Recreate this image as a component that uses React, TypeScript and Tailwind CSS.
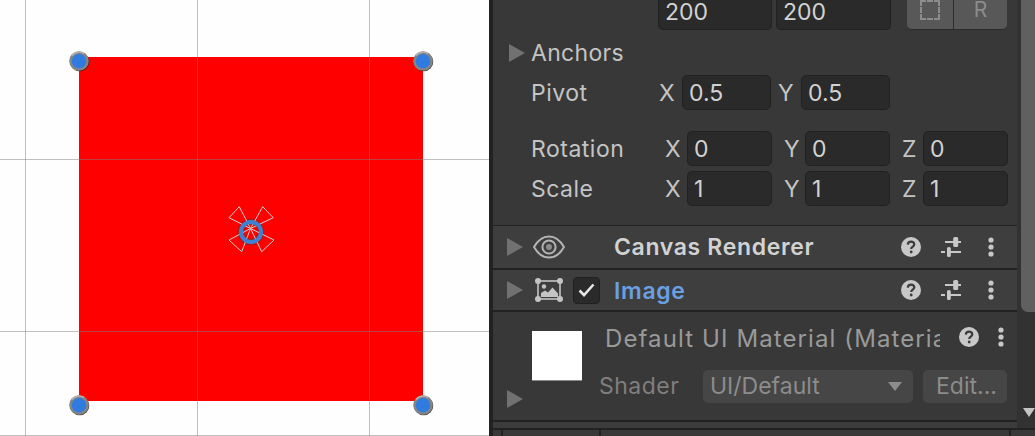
import React from 'react';

const FONT = "font-['Inter','Liberation_Sans',sans-serif]";

// scene view handles
const Handle: React.FC<{ pos: string }> = ({ pos }) => (
  <svg className={`absolute w-[22px] h-[22px] ${pos}`} viewBox="0 0 22 22">
    <circle cx="11.7" cy="11.7" r="9.6" fill="#1c1c1c" opacity="0.8" />
    <circle cx="11" cy="11" r="9.8" fill="#858585" />
    <path d="M4 5.5A9 9 0 0 1 16 3.5" stroke="#b4b4b4" strokeWidth="1.6" fill="none" />
    <circle cx="11" cy="11.2" r="7.2" fill="#2f7be0" />
  </svg>
);

const Field: React.FC<{ width: string; value: string }> = ({ width, value }) => (
  <div className={`${width} h-[35px] shrink-0 rounded-[5px] border border-[#212121] bg-[#2a2a2a] pl-[6px] text-[23px] leading-[35px] text-[#d2d2d2]`}>
    {value}
  </div>
);

// same field but running off the top of the window
const CutField: React.FC<{ width: string; value: string }> = ({ width, value }) => (
  <div className={`${width} h-[30px] shrink-0 rounded-b-[5px] border border-t-0 border-[#212121] bg-[#2a2a2a] pl-[6px] pt-px text-[23px] leading-[23px] text-[#d2d2d2]`}>
    {value}
  </div>
);

const Axis: React.FC<{ width: string; children: React.ReactNode }> = ({ width, children }) => (
  <span className={`${width} h-[35px] pt-px shrink-0 text-[23px] leading-[35px] tracking-[0.5px] text-[#c4c4c4]`}>{children}</span>
);

const Arrow: React.FC<{ className?: string }> = ({ className }) => (
  <svg className={`w-[16px] h-[18px] shrink-0 ${className ?? ''}`} viewBox="0 0 16 18">
    <path d="M0 0L16 9L0 18Z" fill="#717171" />
  </svg>
);

const HelpIcon = () => (
  <svg className="w-[20px] h-[20px] shrink-0" viewBox="0 0 20 20">
    <circle cx="10" cy="10" r="10" fill="#c8c8c8" />
    <path d="M6.8 7.6C6.9 5.6 8.3 4.6 10.1 4.6C12 4.6 13.3 5.7 13.3 7.3C13.3 9.6 10.2 9.6 10.2 12" stroke="#3c3c3c" strokeWidth="2.2" fill="none" />
    <circle cx="10.2" cy="15" r="1.4" fill="#3c3c3c" />
  </svg>
);

const SlidersIcon = () => (
  <svg className="w-[20px] h-[20px] shrink-0" viewBox="0 0 20 20">
    <path d="M4 5H13M16 5H20M0 15H4M9 15H20" stroke="#c8c8c8" strokeWidth="1.8" fill="none" />
    <rect x="12.2" y="0" width="5" height="10" rx="1.6" fill="#c8c8c8" />
    <rect x="6" y="10" width="3.8" height="10" rx="1.6" fill="#c8c8c8" />
  </svg>
);

const DotsIcon = () => (
  <svg className="w-[6px] h-[20px] shrink-0" viewBox="0 0 6 20">
    <circle cx="3" cy="3" r="2.6" fill="#c8c8c8" />
    <circle cx="3" cy="10" r="2.6" fill="#c8c8c8" />
    <circle cx="3" cy="17" r="2.6" fill="#c8c8c8" />
  </svg>
);

const EyeIcon = () => (
  <svg className="w-[32px] h-[24px] shrink-0" viewBox="0 0 32 24">
    <path d="M1 12C5 5 10 1.5 16 1.5C22 1.5 27 5 31 12C27 19 22 22.5 16 22.5C10 22.5 5 19 1 12Z" fill="none" stroke="#b4b4b4" strokeWidth="2" />
    <circle cx="16" cy="12" r="6.6" fill="none" stroke="#b4b4b4" strokeWidth="2" />
    <circle cx="16" cy="12" r="3" fill="#8c8c8c" />
  </svg>
);

const ImageIcon = () => (
  <svg className="w-[28px] h-[24px] shrink-0" viewBox="0 0 28 24">
    <rect x="3" y="3" width="22" height="18" fill="none" stroke="#c4c4c4" strokeWidth="1.6" />
    <circle cx="3" cy="3" r="3" fill="#c4c4c4" />
    <circle cx="25" cy="3" r="3" fill="#c4c4c4" />
    <circle cx="3" cy="21" r="3" fill="#c4c4c4" />
    <circle cx="25" cy="21" r="3" fill="#c4c4c4" />
    <circle cx="9" cy="8.5" r="2.2" fill="#c4c4c4" />
    <path d="M6 19V15L10 12.5L13 14.5L17.5 9.5L23 15.5V19Z" fill="#c4c4c4" />
  </svg>
);

const SceneView = () => (
  <div className="relative w-[489px] h-full shrink-0 bg-[#fefefe] overflow-hidden">
    <div className="absolute left-[79px] top-[57px] w-[344px] h-[344px] bg-[#ff0000]" />
    <div className="absolute left-[25px] top-0 w-px h-full bg-[#808080]/50" />
    <div className="absolute left-[197px] top-0 w-px h-full bg-[#808080]/50" />
    <div className="absolute left-[369px] top-0 w-px h-full bg-[#808080]/50" />
    <div className="absolute left-0 top-[159px] w-full h-px bg-[#808080]/50" />
    <div className="absolute left-0 top-[331px] w-full h-px bg-[#808080]/50" />
    <div className="absolute left-0 top-[435px] w-full h-px bg-[#808080]/50" />
    <Handle pos="left-[68px] top-[50px]" />
    <Handle pos="left-[412px] top-[50px]" />
    <Handle pos="left-[68px] top-[394px]" />
    <Handle pos="left-[412px] top-[394px]" />
    {/* pivot and anchor flower */}
    <svg className="absolute left-[215px] top-[195px] w-[70px] h-[70px]" viewBox="0 0 70 70">
      <circle cx="36" cy="37" r="10" fill="none" stroke="#b01a1a" strokeWidth="7" />
      <g fill="none" stroke="#cfcfcf" strokeWidth="1">
        <path d="M35.5 33.5L24.3 11.7L14 22.7L35.5 33.5" />
        <path d="M35.5 33.5L47.7 11.7L58.3 22.7L35.5 33.5" />
        <path d="M35.5 33.5L14 45L26.7 56.7L35.5 33.5" />
        <path d="M35.5 33.5L59 45L46.7 56.7L35.5 33.5" />
      </g>
      <circle cx="36" cy="37" r="10" fill="none" stroke="#3f80d2" strokeWidth="4" />
    </svg>
  </div>
);

const ComponentRow: React.FC<{ height: string; icon: React.ReactNode; title: string; tone: string }> = ({ height, icon, title, tone }) => (
  <div className={`${height} flex items-center bg-[#3e3e3e] pl-[14px] border-b-2 border-[#222222]`}>
    <Arrow />
    {icon}
    <span className={`ml-auto w-[287px] shrink-0 text-[23px] font-semibold leading-none tracking-[0.65px] ${tone}`}>{title}</span>
    <div className="flex items-center w-[93px] shrink-0 mr-[23px]">
      <HelpIcon />
      <div className="ml-[20px]"><SlidersIcon /></div>
      <div className="ml-[27px]"><DotsIcon /></div>
    </div>
  </div>
);

const Inspector = () => (
  <div className="flex-1 flex flex-col bg-[#383838]">
    <div className="h-[225px] shrink-0 flex flex-col">
      <div className="h-[30px] flex items-start pl-[165px]">
        <div className="flex gap-[4px] shrink-0">
          <CutField width="w-[114px]" value="200" />
          <CutField width="w-[115px]" value="200" />
        </div>
        <div className="ml-[16px] flex h-[30px] w-[100px] shrink-0 rounded-b-[5px] border-b border-[#2a2a2a] bg-[#585858]">
          <div className="flex w-[47px] items-start justify-center border-r border-[#2c2c2c]">
            <div className="w-[20px] h-[20px] border-2 border-dashed border-[#8c8c8c]" />
          </div>
          <div className="flex-1 flex items-start justify-center text-[21px] leading-[20px] text-[#8c8c8c]">R</div>
        </div>
      </div>
      <div className="h-[45px] flex items-center pl-[16px] pt-[1px]">
        <Arrow />
        <span className="ml-[6px] text-[23px] leading-none tracking-[0.3px] text-[#c4c4c4]">Anchors</span>
      </div>
      <div className="flex pl-[38px]">
        <Axis width="w-[128px]">Pivot</Axis>
        <Axis width="w-[23px]">X</Axis>
        <Field width="w-[89px]" value="0.5" />
        <div className="w-[7px]" />
        <Axis width="w-[23px]">Y</Axis>
        <Field width="w-[89px]" value="0.5" />
      </div>
      <div className="flex pl-[38px] mt-[21px]">
        <Axis width="w-[134px]">Rotation</Axis>
        <Axis width="w-[22px]">X</Axis>
        <Field width="w-[85px]" value="0" />
        <div className="w-[12px]" />
        <Axis width="w-[21px]">Y</Axis>
        <Field width="w-[85px]" value="0" />
        <div className="w-[12px]" />
        <Axis width="w-[21px]">Z</Axis>
        <Field width="w-[85px]" value="0" />
      </div>
      <div className="flex pl-[38px] mt-[5px]">
        <Axis width="w-[134px]">Scale</Axis>
        <Axis width="w-[22px]">X</Axis>
        <Field width="w-[85px]" value="1" />
        <div className="w-[12px]" />
        <Axis width="w-[21px]">Y</Axis>
        <Field width="w-[85px]" value="1" />
        <div className="w-[12px]" />
        <Axis width="w-[21px]">Z</Axis>
        <Field width="w-[85px]" value="1" />
      </div>
    </div>
    <div className="h-px bg-[#222222]" />
    <ComponentRow height="h-[44px]" icon={<div className="ml-[10px]"><EyeIcon /></div>} title="Canvas Renderer" tone="text-[#d2d2d2]" />
    <ComponentRow
      height="h-[42px]"
      icon={
        <div className="ml-[12px] flex items-center gap-[10px]">
          <ImageIcon />
          <div className="w-[27px] h-[27px] rounded-[4px] border border-[#212121] bg-[#2a2a2a] flex items-center justify-center">
            <svg className="w-[17px] h-[14px]" viewBox="0 0 17 14">
              <path d="M1.5 7.5L6 12L15.5 1.5" fill="none" stroke="#e6e6e6" strokeWidth="2.6" />
            </svg>
          </div>
        </div>
      }
      title="Image"
      tone="pt-[3px] text-[#6a9fe2]"
    />
    {/* material block */}
    <div className="h-[110px] shrink-0 flex border-b-2 border-[#222222]">
      <div className="w-[96px] shrink-0 pl-[14px] flex items-end pb-[12px]">
        <Arrow />
        <div className="ml-[9px] self-start mt-[19px] w-[50px] h-[50px] shrink-0 bg-white border-b border-[#8a8a8a]" />
      </div>
      <div className="flex-1 flex flex-col">
        <div className="flex items-center h-[52px] pl-[16px] pb-[2px]">
          <span className="w-[335px] h-[30px] pt-[2px] shrink-0 overflow-hidden whitespace-nowrap text-[24px] leading-[30px] tracking-[1.1px] text-[#9a9a9a]">Default UI Material (Materia</span>
          <div className="ml-[19px]"><HelpIcon /></div>
          <div className="ml-[19px]"><DotsIcon /></div>
        </div>
        <div className="flex items-center h-[33px] mt-[6px] pl-[10px]">
          <span className="w-[104px] shrink-0 text-[23px] leading-none tracking-[0.5px] text-[#7f7f7f]">Shader</span>
          <div className="w-[210px] h-[33px] shrink-0 rounded-[5px] bg-[#464646] flex items-center pl-[7px] pr-[11px] text-[23px] leading-none text-[#8c8c8c]">
            UI/Default
            <svg className="ml-auto w-[14px] h-[9px]" viewBox="0 0 14 9">
              <path d="M0 0H14L7 9Z" fill="#8c8c8c" />
            </svg>
          </div>
          <div className="ml-[10px] w-[84px] h-[33px] shrink-0 rounded-[5px] bg-[#464646] pl-[13px] text-[23px] leading-[33px] text-[#8c8c8c]">Edit...</div>
        </div>
      </div>
    </div>
    <div className="flex-1 bg-[#3c3c3c]" />
  </div>
);

export default function App() {
  return (
    <div className={`flex w-[1035px] h-[436px] overflow-hidden bg-[#383838] ${FONT}`}>
      <SceneView />
      <div className="w-[4px] shrink-0 bg-[#222222]" />
      <div className="flex-1 flex flex-col">
        <div className="h-[428px] shrink-0 flex">
          <Inspector />
          {/* scrollbar */}
          <div className="w-[18px] shrink-0 flex flex-col items-end bg-[#323232]">
            <div className="w-[14px] h-[312px] rounded-bl-[7px] bg-[#606060]" />
            <svg className="mt-[96px] w-[12px] h-[9px]" viewBox="0 0 12 9">
              <path d="M0 0H12L6 9Z" fill="#c4c4c4" />
            </svg>
          </div>
        </div>
        <div className="flex-1 flex border-t-2 border-[#222222]">
          <div className="w-[10px] border-r-2 border-[#222222]" />
          <div className="w-[98px] border-r-2 border-[#222222]" />
          <div className="w-[410px] border-r-2 border-[#222222]" />
        </div>
      </div>
    </div>
  );
}
